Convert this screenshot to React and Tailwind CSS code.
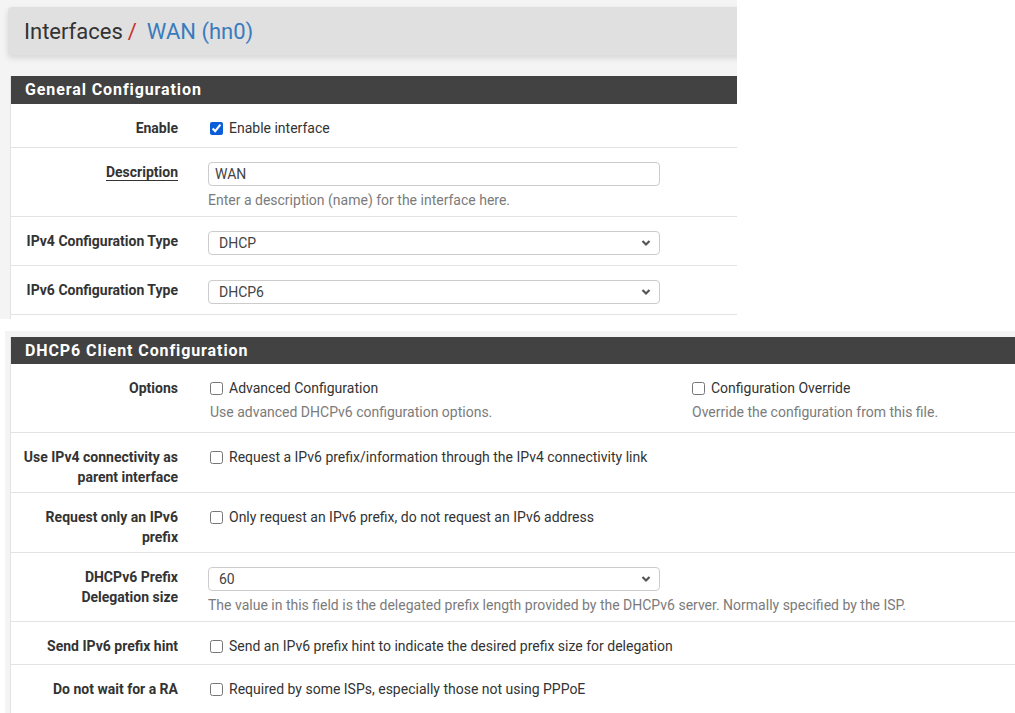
import React from "react";

const Chevron = () => (
  <svg
    className="absolute right-[8px] top-1/2 -translate-y-1/2 pointer-events-none"
    width="10"
    height="7"
    viewBox="0 0 10 7"
  >
    <polyline points="1.5,1.5 5,5 8.5,1.5" fill="none" stroke="#555" strokeWidth="2.2" />
  </svg>
);

const Select = ({ value }) => (
  <div className="relative w-[452px] h-[24px] border border-[#cccccc] rounded-[4px] bg-white flex items-center pl-[10px] text-[14px] text-[#444]">
    {value}
    <Chevron />
  </div>
);

const Check = ({ checked, label }) => (
  <label className="flex items-center gap-[6px] text-[14px] leading-[20px] text-[#333]">
    <input
      type="checkbox"
      defaultChecked={checked}
      className="m-0 ml-[2px] w-[13px] h-[13px] accent-[#0b5ed7]"
    />
    <span>{label}</span>
  </label>
);

const Help = ({ children, className = "" }) => (
  <div className={`text-[14px] leading-[20px] text-[#7b7b7b] ${className}`}>{children}</div>
);

const Row = ({ label, underline, height, children }) => (
  <div className={`flex border-b border-[#e3e3e3] ${height}`}>
    <div className="w-[182px] shrink-0 pt-[14px] pr-[15px] text-right text-[14px] leading-[20px] font-bold text-[#333] whitespace-nowrap">
      {underline ? (
        <span className="border-b border-[#333]">{label}</span>
      ) : (
        label
      )}
    </div>
    <div className="pl-[15px] pt-[14px] flex-1">{children}</div>
  </div>
);

const PanelHead = ({ title, height }) => (
  <div className={`${height} bg-[#424242] flex items-center pl-[14px] text-white text-[16px] font-bold tracking-[0.9px]`}>
    {title}
  </div>
);

export default function App() {
  return (
    <div className="w-[1015px] h-[713px] bg-white overflow-hidden font-['Roboto',sans-serif]">
      {/* first capture */}
      <div className="w-[737px] h-[319px] bg-[#f4f4f4] overflow-hidden pt-[7px]">
        <div className="ml-[8px] w-[760px] h-[48px] bg-[#e0e0e0] rounded-l-[4px] shadow-[0_3px_6px_rgba(0,0,0,0.13)] flex items-center pl-[16px] text-[22px]">
          <span className="text-[#333]">Interfaces</span>
          <span className="text-[#c9302c] ml-[5px]">/</span>
          <span className="text-[#3a7bbd] ml-[10px]">WAN (hn0)</span>
        </div>
        <div className="mt-[21px] ml-[10px] w-[760px] h-[300px] bg-white border-l border-[#e3e3e3]">
          <PanelHead title="General Configuration" height="h-[28px]" />
          <Row label="Enable" height="h-[44px]">
            <Check checked label="Enable interface" />
          </Row>
          <Row label="Description" underline height="h-[69px]">
            <div className="w-[452px] h-[24px] border border-[#cccccc] rounded-[4px] flex items-center pl-[6px] text-[14px] text-[#444]">
              WAN
            </div>
            <Help className="mt-[4px]">Enter a description (name) for the interface here.</Help>
          </Row>
          <Row label="IPv4 Configuration Type" height="h-[49px]">
            <Select value="DHCP" />
          </Row>
          <Row label="IPv6 Configuration Type" height="h-[49px]">
            <Select value="DHCP6" />
          </Row>
        </div>
      </div>

      {/* second capture */}
      <div className="mt-[12px] ml-[5px] w-[1010px] h-[382px] bg-[#f4f4f4] pt-[6px] pl-[5px] overflow-hidden">
        <div className="w-[1010px] h-[400px] bg-white border-l border-[#e3e3e3]">
          <PanelHead title="DHCP6 Client Configuration" height="h-[27px]" />
          <Row label="Options" height="h-[69px]">
            <div className="flex">
              <div className="w-[482px]">
                <Check label="Advanced Configuration" />
                <Help className="mt-[4px] pl-[2px]">Use advanced DHCPv6 configuration options.</Help>
              </div>
              <div>
                <Check label="Configuration Override" />
                <Help className="mt-[4px] pl-[2px]">Override the configuration from this file.</Help>
              </div>
            </div>
          </Row>
          <Row
            label={
              <>
                Use IPv4 connectivity as
                <br />
                parent interface
              </>
            }
            height="h-[60px]"
          >
            <Check label="Request a IPv6 prefix/information through the IPv4 connectivity link" />
          </Row>
          <Row
            label={
              <>
                Request only an IPv6
                <br />
                prefix
              </>
            }
            height="h-[60px]"
          >
            <Check label="Only request an IPv6 prefix, do not request an IPv6 address" />
          </Row>
          <Row
            label={
              <>
                DHCPv6 Prefix
                <br />
                Delegation size
              </>
            }
            height="h-[69px]"
          >
            <Select value="60" />
            <Help className="mt-[4px]">
              The value in this field is the delegated prefix length provided by the DHCPv6 server. Normally specified by the ISP.
            </Help>
          </Row>
          <Row label="Send IPv6 prefix hint" height="h-[43px]">
            <Check label="Send an IPv6 prefix hint to indicate the desired prefix size for delegation" />
          </Row>
          <Row label="Do not wait for a RA" height="h-[60px]">
            <Check label="Required by some ISPs, especially those not using PPPoE" />
          </Row>
        </div>
      </div>
    </div>
  );
}
